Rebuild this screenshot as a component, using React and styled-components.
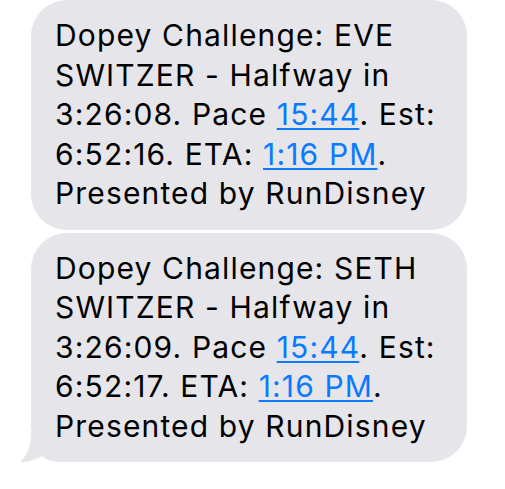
import styled, { createGlobalStyle } from 'styled-components';

const GlobalStyle = createGlobalStyle`
  html, body {
    margin: 0;
    padding: 0;
    background: #ffffff;
  }
`;

const Thread = styled.div`
  display: flex;
  flex-direction: column;
  gap: 3px;
  padding-left: 31px;
  width: 505px;
  height: 489px;
  box-sizing: border-box;
  font-family: Inter, 'Liberation Sans', sans-serif;
`;

const Bubble = styled.div`
  position: relative;
  width: 436px;
  box-sizing: border-box;
  padding: 16px 10px 16px 24px;
  background: #e5e5ea;
  border-radius: 36px;
  color: #000;
  font-size: 30px;
  line-height: 39.5px;
  letter-spacing: 1.15px;
  white-space: nowrap;
`;

// sits above the tail
const Text = styled.div`
  position: relative;
`;

const Link = styled.a`
  color: #0a7aff;
  text-decoration: underline;
  text-decoration-thickness: 1.5px;
  text-underline-offset: 3px;
`;

// little tail on the last bubble in the group
const Tail = styled.svg`
  position: absolute;
  left: -11px;
  bottom: 0;
  width: 45px;
  height: 30px;
`;

const Message = ({ name, half, est, tail }) => (
  <Bubble>
    {tail && (
      <Tail viewBox="0 0 45 30">
        <path
          d="M11 0 C11 14 7 24 0 30 C8 30 15 28 22 24 C27 28 33 30 45 30 L45 0 Z"
          fill="#e5e5ea"
        />
      </Tail>
    )}
    <Text>
      Dopey Challenge: {name}
      <br />
      SWITZER - Halfway in
      <br />
      {half}. Pace <Link>15:44</Link>. Est:
      <br />
      {est}. ETA: <Link>1:16 PM</Link>.
      <br />
      Presented by RunDisney
    </Text>
  </Bubble>
);

export default function App() {
  return (
    <>
      <GlobalStyle />
      <Thread>
        <Message name="EVE" half="3:26:08" est="6:52:16" />
        <Message name="SETH" half="3:26:09" est="6:52:17" tail />
      </Thread>
    </>
  );
}
